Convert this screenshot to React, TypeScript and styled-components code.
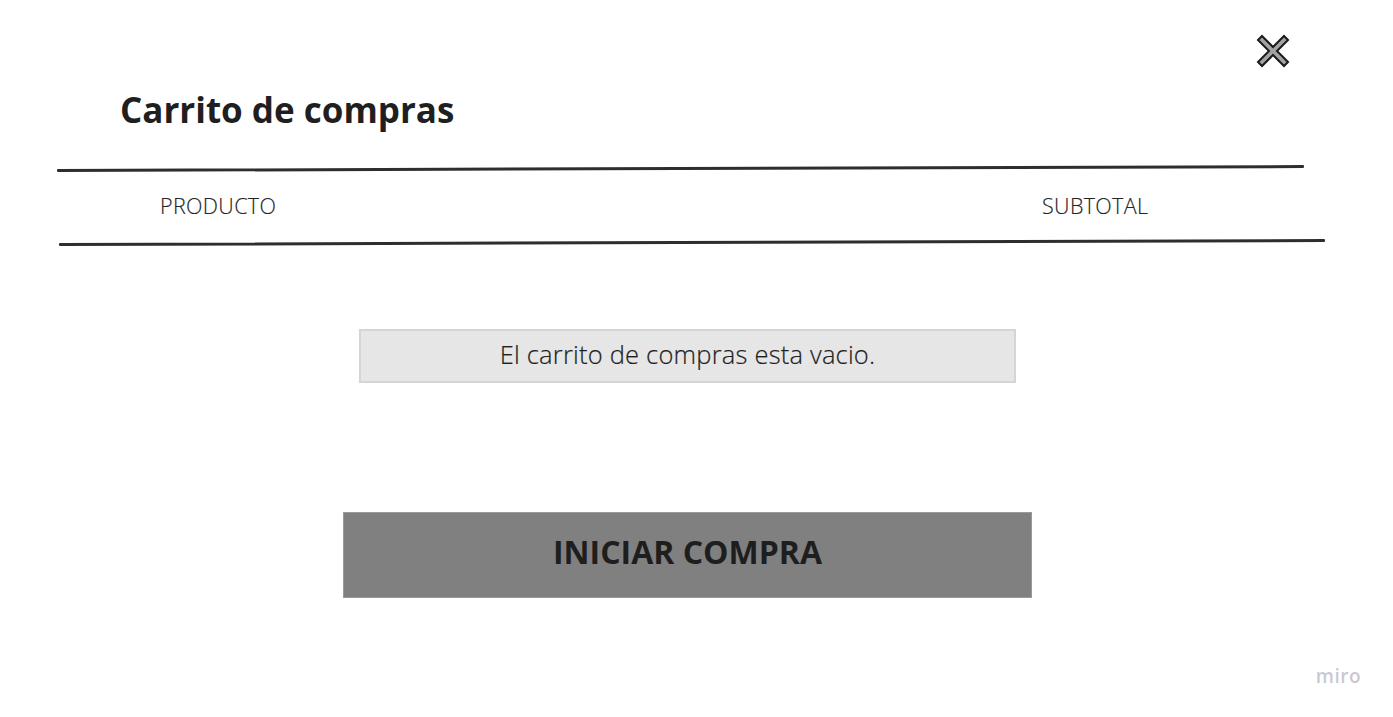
import React from "react";
import styled, { createGlobalStyle } from "styled-components";

const GlobalStyle = createGlobalStyle`
  html, body {
    margin: 0;
    padding: 0;
    background: #ffffff;
    font-family: "Open Sans", "Noto Sans", sans-serif;
    color: #222222;
  }
`;

const Page = styled.div`
  position: relative;
  width: 1393px;
  height: 717px;
  overflow: hidden;
  background: #ffffff;
`;

const CloseRow = styled.div`
  display: flex;
  justify-content: flex-end;
  padding: 33px 102px 0 0;
  height: 36px;
`;

const CloseButton = styled.button`
  width: 36px;
  height: 36px;
  padding: 0;
  border: none;
  background: transparent;
  cursor: pointer;
  display: flex;
  align-items: center;
  justify-content: center;
`;

const Title = styled.h1`
  margin: 19px 0 0 120px;
  font-size: 35px;
  font-weight: 700;
  line-height: 44px;
  color: #1f1f1f;
`;

const TableHead = styled.div`
  margin-top: 37px;
  display: flex;
  flex-direction: column;
`;

const Rule = styled.div<{ $left: number; $width: number; $tilt: number }>`
  margin-left: ${(p) => p.$left}px;
  width: ${(p) => p.$width}px;
  height: 3px;
  background: #2e2e2e;
  border-radius: 1px;
  transform-origin: left center;
  transform: rotate(${(p) => p.$tilt}deg);
`;

const HeadRow = styled.div`
  display: grid;
  grid-template-columns: 882px auto;
  padding-left: 160px;
  height: 71px;
  align-items: center;
`;

const HeadCell = styled.span`
  font-size: 21.5px;
  font-weight: 300;
  color: #242424;
  letter-spacing: 0.35px;
  padding-bottom: 4px;
  -webkit-text-stroke: 0.15px #242424;
`;

const Body = styled.div`
  display: flex;
  flex-direction: column;
  align-items: center;
`;

const EmptyNotice = styled.div`
  margin-top: 83px;
  margin-left: -18px;
  width: 653px;
  height: 50px;
  box-sizing: content-box;
  background: #e6e6e6;
  border: 2px solid #d5d5d5;
  display: flex;
  align-items: center;
  justify-content: center;
  padding-bottom: 0;
  font-size: 25.5px;
  line-height: 44px;
  font-weight: 300;
  letter-spacing: 0.2px;
  color: #1f1f1f;
  -webkit-text-stroke: 0.2px #1f1f1f;
`;

const NoticeText = styled.span`
  display: block;
  margin-bottom: 5px;
`;

const StartButton = styled.button`
  margin-top: 129px;
  margin-left: -18px;
  width: 689px;
  height: 86px;
  background: #808080;
  border: 1px solid #9a9a9a;
  font-family: "Open Sans", "Noto Sans", sans-serif;
  font-size: 32px;
  font-weight: 700;
  color: #1e1e1e;
  cursor: pointer;
  display: flex;
  align-items: center;
  justify-content: center;
  padding: 0 0 8px 0;
`;

const Brand = styled.span`
  position: absolute;
  right: 32px;
  bottom: 28px;
  font-family: "Open Sans", sans-serif;
  font-size: 19px;
  font-weight: 600;
  color: #c9c9d2;
  letter-spacing: 0.5px;
`;

const CloseIcon = () => (
  <svg width="34" height="34" viewBox="0 0 34 34">
    <polygon
      points="6,2 17,13 28,2 32,6 21,17 32,28 28,32 17,21 6,32 2,28 13,17 2,6"
      fill="#a3a3a3"
      stroke="#1a1a1a"
      strokeWidth="2"
      strokeLinejoin="miter"
    />
  </svg>
);

export default function App() {
  return (
    <Page>
      <GlobalStyle />
      <CloseRow>
        <CloseButton aria-label="Cerrar">
          <CloseIcon />
        </CloseButton>
      </CloseRow>
      <Title>Carrito de compras</Title>
      <TableHead>
        <Rule $left={57} $width={1247} $tilt={-0.18} />
        <HeadRow>
          <HeadCell>PRODUCTO</HeadCell>
          <HeadCell>SUBTOTAL</HeadCell>
        </HeadRow>
        <Rule $left={59} $width={1266} $tilt={-0.18} />
      </TableHead>
      <Body>
        <EmptyNotice>
          <NoticeText>El carrito de compras esta vacio.</NoticeText>
        </EmptyNotice>
        <StartButton>INICIAR COMPRA</StartButton>
      </Body>
      <Brand>miro</Brand>
    </Page>
  );
}
